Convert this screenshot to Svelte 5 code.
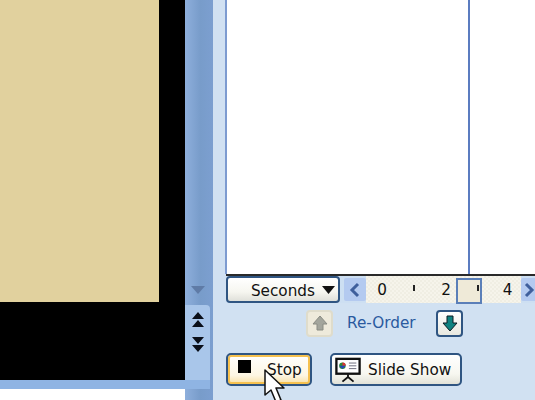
<script>
	// ruler labels and ticks along the animation timeline
	const marks = ['0', '', '2', '', '4'];
</script>

<div class="window">
	<div class="editor">
		<div class="stage">
			<div class="slide"></div>
			<div class="matte"></div>
		</div>
		<div class="matte-bottom"></div>
		<div class="hscroll"></div>
	</div>

	<div class="vscroll">
		<div class="track">
			<svg class="track-arrow" width="16" height="10" viewBox="0 0 16 10"><path d="M1 1h14L8 9z" fill="#5f7ba6" /></svg>
		</div>
		<div class="nav">
			<svg width="14" height="18" viewBox="0 0 14 18"><path d="M7 1l6 7H1zM7 9l6 7H1z" fill="#0a0f1a" /></svg>
			<svg width="14" height="18" viewBox="0 0 14 18"><path d="M1 1h12L7 8zM1 9h12l-6 7z" fill="#0a0f1a" /></svg>
		</div>
		<div class="nav-foot"></div>
	</div>

	<div class="pane">
		<div class="list">
			<div class="list-col"></div>
		</div>

		<div class="timeline">
			<button class="seconds"><span class="nudge">Seconds</span> <svg width="13" height="8" viewBox="0 0 13 8"><path d="M0 0h13L6.5 8z" fill="#111" /></svg></button>
			<div class="arrow">
				<svg width="12" height="16" viewBox="0 0 12 16"><path d="M9 2L3 8l6 6" fill="none" stroke="#3f5f9c" stroke-width="3" /></svg>
			</div>
			<div class="ruler">
				<div class="thumb"></div>
				{#each marks as m}
					{#if m}
						<span class="mark">{m}</span>
					{:else}
						<i class="tick"></i>
					{/if}
				{/each}
			</div>
			<div class="arrow end">
				<svg width="12" height="16" viewBox="0 0 12 16"><path d="M3 2l6 6-6 6" fill="none" stroke="#3f5f9c" stroke-width="3" /></svg>
			</div>
		</div>

		<div class="reorder">
			<div class="move off">
				<svg width="18" height="18" viewBox="0 0 18 18"><path d="M9 2l7 8h-4v6H6v-6H2z" fill="#a3a59c" stroke="#8a8c84" /></svg>
			</div>
			<span class="label">Re-Order</span>
			<div class="move">
				<svg width="18" height="18" viewBox="0 0 18 18"><path d="M6 2h6v7h4l-7 8-7-8h4z" fill="#0f8280" stroke="#0a1a22" /></svg>
			</div>
		</div>

		<div class="actions">
			<button class="action stop"><span class="square"></span><span class="stop-text">Stop</span></button>
			<button class="action show">
				<svg width="26" height="26" viewBox="0 0 28 27">
					<rect x="1.500" y="1.500" width="25" height="16" fill="#fff" stroke="#111" stroke-width="2.500" />
					<circle cx="8" cy="9" r="3.500" fill="#2a8a3a" />
					<path d="M8 9V5.500A3.500 3.500 0 0 1 11.500 9z" fill="#d33" />
					<path d="M4.500 9h7L8 12.500z" fill="#2347b8" />
					<path d="M15 6h8M15 9h8M15 12h8" stroke="#667" stroke-width="1" />
					<path d="M14 18v4M14 21l-6 5M14 21l6 5" stroke="#111" stroke-width="2" fill="none" />
				</svg>
				<span>Slide Show</span>
			</button>
		</div>
	</div>

	<svg class="cursor" width="26" height="36" viewBox="0 0 26 36">
		<path d="M1 1v25l6-5 5 12 5-2-5-12h8z" fill="#fff" stroke="#111" stroke-width="1.500" stroke-linejoin="round" />
	</svg>
</div>

<style>
	:global(body) {
		margin: 0;
	}

	.window {
		position: relative;
		display: flex;
		width: 535px;
		height: 400px;
		overflow: hidden;
		font-family: "DejaVu Sans", sans-serif;
		background: #d1e1f2;
	}

	.editor {
		display: flex;
		flex-direction: column;
		width: 185px;
		background: #fff;
	}

	.stage {
		display: flex;
		height: 302px;
		background: #000;
	}

	.slide {
		width: 159px;
		background: #e1d19e;
	}

	.matte {
		flex: 1;
	}

	.matte-bottom {
		height: 78px;
		background: #000;
	}

	.hscroll {
		height: 9px;
		background: #8fb4e3;
	}

	.vscroll {
		display: flex;
		flex-direction: column;
		width: 28px;
		background: linear-gradient(90deg, #8eafdc, #789cca 55%, #7c9fd0);
	}

	.track {
		display: flex;
		flex: none;
		height: 305px;
		align-items: flex-end;
		justify-content: center;
		box-sizing: border-box;
		padding: 0 3px 10px 0;
	}

	.nav {
		display: flex;
		flex-direction: column;
		flex: none;
		width: 25px;
		height: 75px;
		box-sizing: border-box;
		padding-top: 6px;
		gap: 7px;
		align-items: center;
		background: #a9c6ea;
		border-top-right-radius: 4px;
	}

	.nav-foot {
		width: 25px;
		height: 9px;
		background: #8fb4e3;
	}

	.pane {
		display: flex;
		flex-direction: column;
		flex: 1;
		min-width: 0;
		padding-left: 11px;
		background: #d1e1f2;
	}

	.list {
		display: flex;
		justify-content: flex-end;
		height: 274px;
		box-sizing: border-box;
		padding-right: 65px;
		margin-left: 1px;
		background: #fff;
		border-left: 2px solid #7d9bd0;
		flex: none;
	}

	.list-col {
		width: 0;
		border-left: 2px solid #5b7cc0;
	}

	.timeline {
		display: flex;
		flex: none;
		align-items: stretch;
		height: 29px;
		margin-left: 2px;
		border-top: 2px solid #2a2a2a;
		background: #cddff2;
		box-sizing: border-box;
	}

	.seconds {
		display: flex;
		align-items: center;
		justify-content: flex-end;
		gap: 7px;
		width: 114px;
		flex: none;
		padding: 0 3px 0 0;
		margin: 0;
		font: 15.250px "DejaVu Sans", sans-serif;
		color: #111;
		background: linear-gradient(#fff, #f6f6f0 60%, #dfe0da);
		border: 2px solid #2f5582;
		border-radius: 4px;
	}

	.nudge {
		padding-top: 2px;
	}

	.arrow {
		display: flex;
		align-items: center;
		justify-content: center;
		flex: none;
		width: 22px;
		margin: 2px 0 2px 4px;
		background: #b4caf0;
		border-radius: 2px;
	}

	.arrow.end {
		width: 16px;
		margin-left: 0;
	}

	.ruler {
		position: relative;
		display: grid;
		grid-template-columns: repeat(4, 32px) 27px;
		width: 155px;
		flex: none;
		align-items: center;
		justify-items: center;
		font-size: 15.250px;
		color: #111;
		background-color: #f6f4eb;
		background-image: conic-gradient(#f0eee3 25%, transparent 0 50%, #f0eee3 0 75%, transparent 0);
		background-size: 4px 4px;
	}

	.mark,
	.tick {
		position: relative;
	}

	.tick {
		width: 2px;
		height: 6px;
		margin-bottom: 3px;
		background: #222;
	}

	.thumb {
		position: absolute;
		left: 90px;
		top: 2px;
		width: 22px;
		height: 22px;
		border: 2px solid #5b7fb8;
		background: #efead8;
	}

	.reorder {
		display: flex;
		flex: none;
		align-items: center;
		height: 40px;
		padding-left: 82px;
	}

	.move {
		display: flex;
		align-items: center;
		justify-content: center;
		width: 23px;
		height: 23px;
		border: 2px solid #2f5582;
		border-radius: 4px;
		background: linear-gradient(#fff, #e8e8e0);
	}

	.move.off {
		border-color: #dfdccb;
		background: #eeeadb;
	}

	.label {
		width: 89px;
		margin-left: 14px;
		font-size: 15.250px;
		color: #2a5a9f;
	}

	.actions {
		display: flex;
		flex: none;
		gap: 18px;
		margin: 10px 0 0 2px;
	}

	.action {
		display: flex;
		align-items: center;
		height: 33px;
		padding: 0;
		box-sizing: border-box;
		font: 15.250px "DejaVu Sans", sans-serif;
		color: #111;
		background: linear-gradient(#fff, #f7f7f0 65%, #e2e2d8);
		border: 2px solid #2f5582;
		border-radius: 5px;
	}

	.stop {
		width: 86px;
		padding-left: 10px;
		background: linear-gradient(#fff, #fdf6e3 70%, #f8e0a4);
		box-shadow: inset 0 0 0 2px #f6c14f;
	}

	.square {
		width: 13px;
		height: 13px;
		margin-bottom: 6px;
		background: #000;
	}

	.stop-text {
		margin-left: 16px;
	}

	.show {
		width: 132px;
		gap: 7px;
		padding-left: 3px;
	}

	.cursor {
		position: absolute;
		left: 264px;
		top: 369px;
	}
</style>
